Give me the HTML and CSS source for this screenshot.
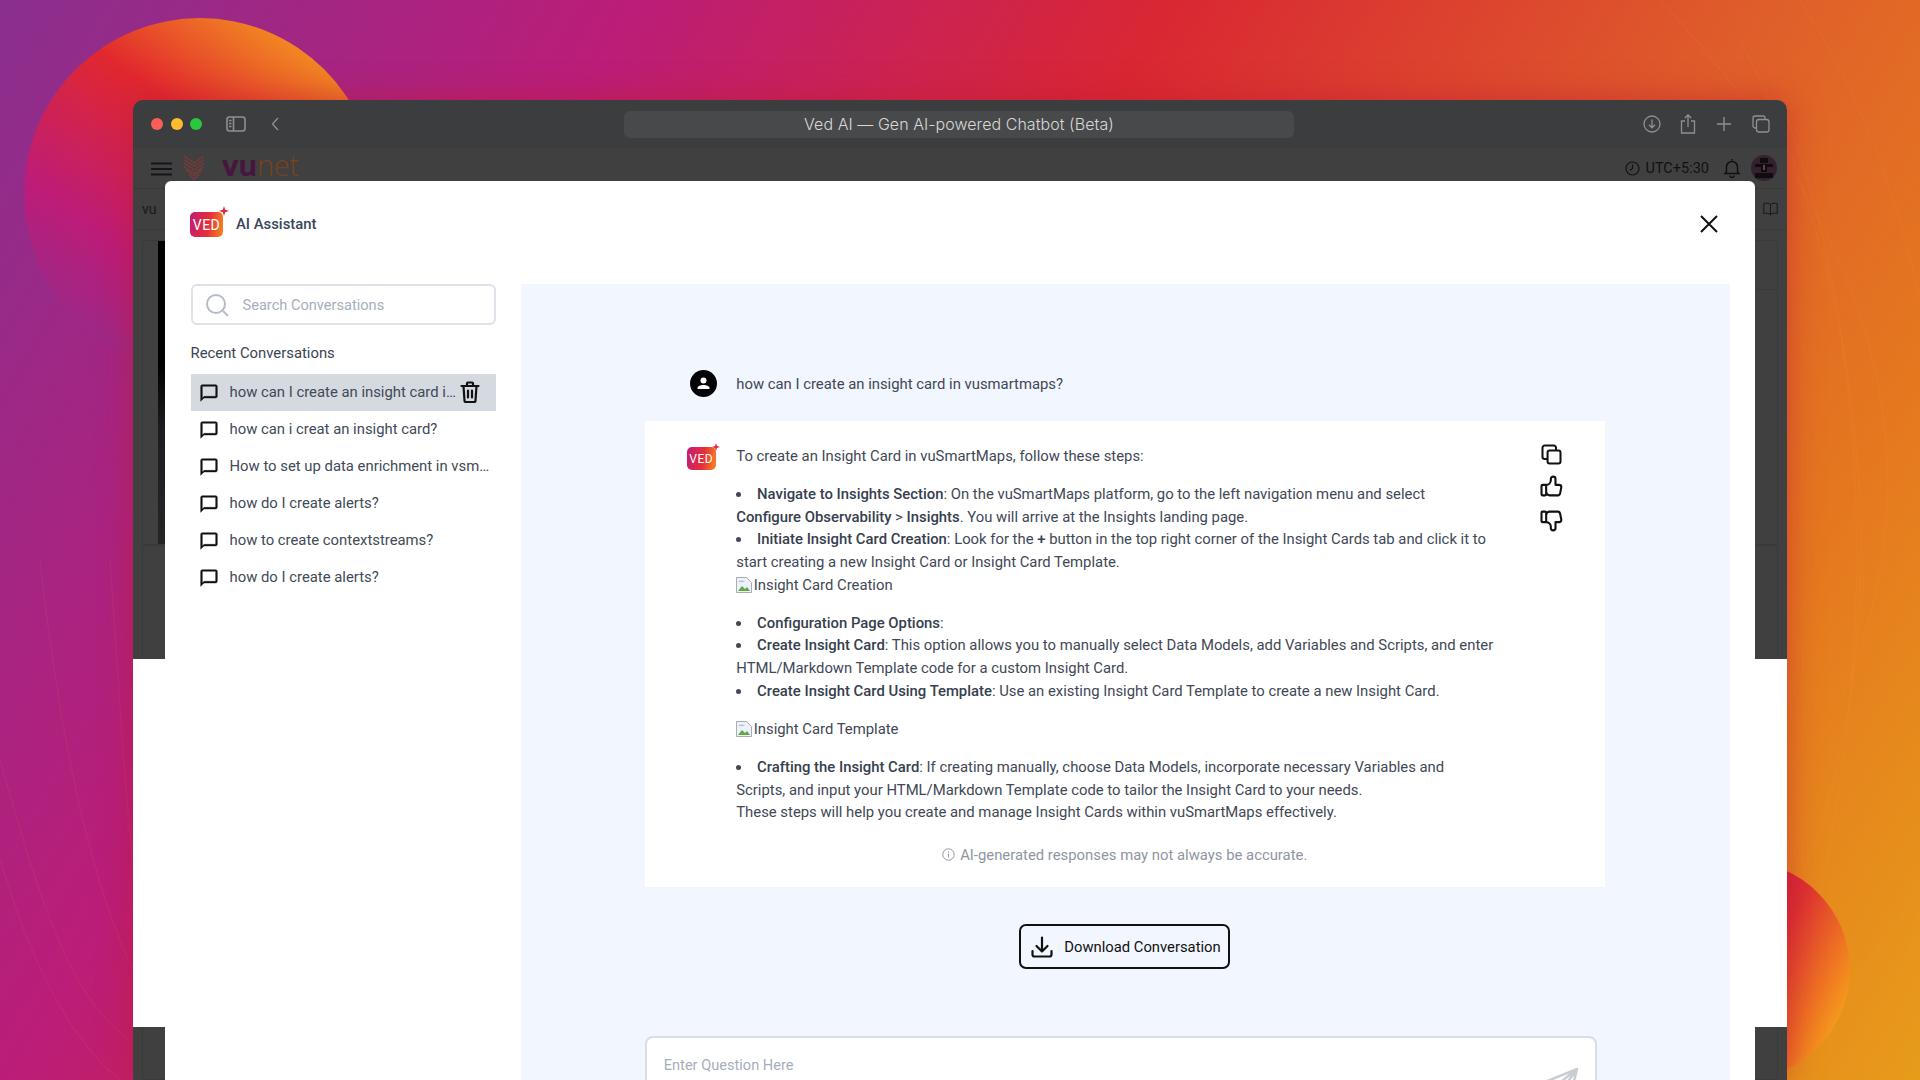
FILE: index.html
```html
<!DOCTYPE html>
<html lang="en">
<head>
<meta charset="utf-8">
<title>Ved AI — Gen AI-powered Chatbot (Beta)</title>
<link rel="stylesheet" href="styles.css">
</head>
<body>
<div class="desktop">
  <svg class="curves" viewBox="0 0 1920 1080" fill="none" aria-hidden="true">
    <path d="M1790 1000C1860 800 1900 400 1780 100"/>
    <path d="M1800 880C1880 700 1900 350 1740 40"/>
    <path d="M1800 780C1930 560 1940 300 1660 0"/>
    <path d="M1840 1080C2000 900 2000 300 1800 0"/>
    <path d="M1790 1040C1880 960 1940 880 1960 780"/>
    <path d="M1840 1080C1900 1040 1940 980 1970 900"/>
    <path d="M0 760C40 900 70 1000 130 1040"/>
    <path d="M0 860C30 960 70 1040 120 1080"/>
    <path d="M40 560C60 740 90 880 133 970"/>
    <path d="M110 560C120 700 125 800 133 860"/>
  </svg>
  <div class="orb orb-left"></div>
  <div class="orb orb-right"></div>

  <div class="window">
    <div class="titlebar">
      <div class="traffic">
        <span class="dot dot-red"></span><span class="dot dot-yellow"></span><span class="dot dot-green"></span>
      </div>
      <svg class="tb-sidebar" width="20" height="16" viewBox="0 0 20 16" fill="none" stroke="#8f9091" stroke-width="1.6"><rect x="1" y="1" width="18" height="14" rx="2.5"/><path d="M7.5 1v14"/><path d="M3 4.5h2.5M3 7.5h2.5M3 10.5h2.5" stroke-width="1.3"/></svg>
      <svg class="tb-back" width="8" height="14" viewBox="0 0 8 14" fill="none" stroke="#8f9091" stroke-width="1.3"><path d="M7 1 1.5 7 7 13"/></svg>
      <div class="address">Ved AI — Gen AI-powered Chatbot (Beta)</div>
      <div class="tb-right">
        <svg class="tb-download" width="18" height="18" viewBox="0 0 18 18" fill="none" stroke="#8f9091" stroke-width="1.3"><circle cx="9" cy="9" r="8"/><path d="M9 4.5v8M6 9.8 9 12.8 12 9.8"/></svg>
        <svg width="16" height="20" viewBox="0 0 16 20" fill="none" stroke="#8f9091" stroke-width="1.3"><path d="M5 7H1.5v12h13V7H11M8 13V1M4.8 4 8 1l3.2 3"/></svg>
        <svg width="16" height="16" viewBox="0 0 16 16" fill="none" stroke="#8f9091" stroke-width="1.4"><path d="M8 1v14M1 8h14"/></svg>
        <svg width="18" height="18" viewBox="0 0 18 18" fill="none" stroke="#8f9091" stroke-width="1.3"><rect x="4.5" y="4.5" width="12.5" height="12.5" rx="2.5"/><path d="M4.5 13H3a2 2 0 0 1-2-2V3a2 2 0 0 1 2-2h8a2 2 0 0 1 2 2v1.5"/></svg>
      </div>
    </div>

    <div class="app">
      <header class="app-header">
        <svg class="menu-icon" width="21" height="14" viewBox="0 0 21 14" fill="none" stroke="#15161a" stroke-width="2"><path d="M0 1.5h21M0 7h21M0 12.500h21"/></svg>
        <svg class="vunet-mark" width="22" height="26" viewBox="0 0 22 26" fill="none" stroke="#7a3a3c" stroke-width="1.300"><path d="M1 1l10 7 10-7M1 4.500l10 7 10-7M1 8l10 7 10-7M1 11.500l10 7 10-7M3 15l8 6 8-6M6 19.500l5 5 5-5"/></svg>
        <span class="vunet-word"><b>vu</b><i>net</i></span>
        <div class="app-header-right">
          <svg width="15" height="15" viewBox="0 0 15 15" fill="none" stroke="#101114" stroke-width="1.200"><circle cx="7.500" cy="7.500" r="6.500"/><path d="M7.500 3.500v4l-2.500 2"/></svg>
          <span class="utc">UTC+5:30</span>
          <svg class="bell" width="18" height="20" viewBox="0 0 18 20" fill="none" stroke="#101114" stroke-width="1.500"><path d="M9 1v1.500M3.500 14V9a5.500 5.500 0 0 1 11 0v5l1.500 1.500H2zM7 17.500a2 2 0 0 0 4 0"/></svg>
          <svg class="avatar" width="26" height="26" viewBox="0 0 26 26"><circle cx="13" cy="13" r="13" fill="#34202f"/><path d="M9 3h8v5h-8zM4 9h18v3H4zM10 11h6v6h-6zM4 18h18v5H4z" fill="#0f0c10"/><rect x="12" y="10" width="2" height="5" fill="#6d3a55"/></svg>
        </div>
      </header>
      <div class="app-tabs">
        <span class="tab-label">vu</span>
        <svg class="book" width="15" height="14" viewBox="0 0 15 14" fill="none" stroke="#17181b" stroke-width="1"><path d="M7.500 2.500C6 1 3 1 .8 1.500v10C3 11 6 11 7.500 12.800 9 11 12 11 14.200 11.500v-10C12 1 9 1 7.500 2.500zM7.500 2.500v10.300"/></svg>
      </div>
      <div class="canvas">
        <div class="band band-upper">
          <div class="frame">
            <div class="frame-strip"></div>
            <div class="frame-side"></div>
          </div>
          <div class="frame frame-lower"></div>
        </div>
        <div class="band-white"></div>
        <div class="band band-lower"><div class="frame frame-tail"></div></div>
      </div>

      <section class="modal">
        <div class="modal-head">
          <div class="ved-logo"><span class="ved-text">VED</span><svg class="ved-star" width="10" height="10" viewBox="0 0 10 10"><path d="M5 0 6.200 3.800 10 5 6.200 6.200 5 10 3.800 6.200 0 5 3.800 3.800z" fill="#e3263a"/></svg></div>
          <h1 class="modal-title">AI Assistant</h1>
          <svg class="close" width="20" height="20" viewBox="0 0 20 20" fill="none" stroke="#111" stroke-width="2"><path d="M2 2l16 16M18 2 2 18"/></svg>
        </div>
        <div class="modal-body">
          <aside class="sidebar">
            <label class="search">
              <svg width="24" height="24" viewBox="0 0 24 24" fill="none" stroke="#b5bcc9" stroke-width="2"><circle cx="11" cy="11" r="9"/><path d="M18 18l5 5"/></svg>
              <input type="text" placeholder="Search Conversations">
            </label>
            <h2 class="recent">Recent Conversations</h2>
            <ul class="conv-list">
              <li class="conv conv-active">
                <svg class="bubble" width="20" height="20" viewBox="0 0 24 24"><path d="M20 2H4c-1.100 0-2 .9-2 2v18l4-4h14c1.100 0 2-.9 2-2V4c0-1.100-.9-2-2-2zm0 14H6l-2 2V4h16v12z"/></svg>
                <span class="conv-text">how can I create an insight card in vusmartmaps?</span>
                <svg class="trash" width="24" height="24" viewBox="0 0 24 24" fill="none" stroke="#111" stroke-width="2.200" stroke-linecap="round" stroke-linejoin="round"><path d="M3.500 6h17M9 6V3.500a1 1 0 0 1 1-1h4a1 1 0 0 1 1 1V6M5.500 6l1 14.500a1.500 1.500 0 0 0 1.500 1.500h8a1.500 1.500 0 0 0 1.500-1.500l1-14.500M10 10.500v7M14 10.500v7"/></svg>
              </li>
              <li class="conv">
                <svg class="bubble" width="20" height="20" viewBox="0 0 24 24"><path d="M20 2H4c-1.100 0-2 .9-2 2v18l4-4h14c1.100 0 2-.9 2-2V4c0-1.100-.9-2-2-2zm0 14H6l-2 2V4h16v12z"/></svg>
                <span class="conv-text">how can i creat an insight card?</span>
              </li>
              <li class="conv">
                <svg class="bubble" width="20" height="20" viewBox="0 0 24 24"><path d="M20 2H4c-1.100 0-2 .9-2 2v18l4-4h14c1.100 0 2-.9 2-2V4c0-1.100-.9-2-2-2zm0 14H6l-2 2V4h16v12z"/></svg>
                <span class="conv-text">How to set up data enrichment in vsmartmaps?</span>
              </li>
              <li class="conv">
                <svg class="bubble" width="20" height="20" viewBox="0 0 24 24"><path d="M20 2H4c-1.100 0-2 .9-2 2v18l4-4h14c1.100 0 2-.9 2-2V4c0-1.100-.9-2-2-2zm0 14H6l-2 2V4h16v12z"/></svg>
                <span class="conv-text">how do I create alerts?</span>
              </li>
              <li class="conv">
                <svg class="bubble" width="20" height="20" viewBox="0 0 24 24"><path d="M20 2H4c-1.100 0-2 .9-2 2v18l4-4h14c1.100 0 2-.9 2-2V4c0-1.100-.9-2-2-2zm0 14H6l-2 2V4h16v12z"/></svg>
                <span class="conv-text">how to create contextstreams?</span>
              </li>
              <li class="conv">
                <svg class="bubble" width="20" height="20" viewBox="0 0 24 24"><path d="M20 2H4c-1.100 0-2 .9-2 2v18l4-4h14c1.100 0 2-.9 2-2V4c0-1.100-.9-2-2-2zm0 14H6l-2 2V4h16v12z"/></svg>
                <span class="conv-text">how do I create alerts?</span>
              </li>
            </ul>
          </aside>

          <main class="panel">
            <div class="thread">
              <div class="user-row">
                <svg class="user-avatar" width="27" height="27" viewBox="0 0 27 27"><circle cx="13.500" cy="13.500" r="13.500" fill="#050505"/><circle cx="13.500" cy="10.500" r="3" fill="#fff"/><path d="M7.500 19v-1c0-2 3-3 6-3s6 1 6 3v1z" fill="#fff"/></svg>
                <p class="user-text">how can I create an insight card in vusmartmaps?</p>
              </div>

              <article class="card">
                <div class="card-row">
                  <div class="ved-logo ved-logo-small"><span class="ved-text">VED</span><svg class="ved-star" width="8" height="8" viewBox="0 0 10 10"><path d="M5 0 6.200 3.800 10 5 6.200 6.200 5 10 3.800 6.200 0 5 3.800 3.800z" fill="#e3263a"/></svg></div>
                  <div class="answer">
                    <p>To create an Insight Card in vuSmartMaps, follow these steps:</p>
                    <ul>
                      <li><strong>Navigate to Insights Section</strong>: On the vuSmartMaps platform, go to the left navigation menu and select<br><strong>Configure Observability</strong> &gt; <strong>Insights</strong>. You will arrive at the Insights landing page.</li>
                      <li><strong>Initiate Insight Card Creation</strong>: Look for the <strong>+</strong> button in the top right corner of the Insight Cards tab and click it to start creating a new Insight Card or Insight Card Template.</li>
                    </ul>
                    <p class="broken broken-flush"><svg width="16" height="16" viewBox="0 0 16 16"><path d="M.5.5h10l5 5v10H.5z" fill="#eef2f8" stroke="#a9adb3"/><path d="M2 14l4-5 3 3 2-2 3 4z" fill="#5fa84a"/><path d="M2 5c2-2 5-2 7 0z" fill="#9dc3ee"/></svg><span>Insight Card Creation</span></p>
                    <ul>
                      <li><strong>Configuration Page Options</strong>:</li>
                      <li><strong>Create Insight Card</strong>: This option allows you to manually select Data Models, add Variables and Scripts, and enter HTML/Markdown Template code for a custom Insight Card.</li>
                      <li><strong>Create Insight Card Using Template</strong>: Use an existing Insight Card Template to create a new Insight Card.</li>
                    </ul>
                    <p class="broken"><svg width="16" height="16" viewBox="0 0 16 16"><path d="M.5.5h10l5 5v10H.5z" fill="#eef2f8" stroke="#a9adb3"/><path d="M2 14l4-5 3 3 2-2 3 4z" fill="#5fa84a"/><path d="M2 5c2-2 5-2 7 0z" fill="#9dc3ee"/></svg><span>Insight Card Template</span></p>
                    <ul>
                      <li><strong>Crafting the Insight Card</strong>: If creating manually, choose Data Models, incorporate necessary Variables and Scripts, and input your HTML/Markdown Template code to tailor the Insight Card to your needs.</li>
                    </ul>
                    <p class="answer-end">These steps will help you create and manage Insight Cards within vuSmartMaps effectively.</p>
                  </div>
                  <div class="actions">
                    <svg width="27" height="27" viewBox="0 0 24 24" fill="none" stroke="#111" stroke-width="1.800" stroke-linejoin="round"><rect x="8.500" y="8.500" width="11.500" height="11.500" rx="1.800"/><path d="M16 8.500V6a2 2 0 0 0-2-2H6a2 2 0 0 0-2 2v8a2 2 0 0 0 2 2h2.500"/></svg>
                    <svg width="28" height="28" viewBox="0 0 24 24" fill="none" stroke="#111" stroke-width="1.800" stroke-linecap="round" stroke-linejoin="round"><path d="M7 11v8a1 1 0 0 1-1 1H4a1 1 0 0 1-1-1v-7a1 1 0 0 1 1-1h3a4 4 0 0 0 4-4V6a2 2 0 0 1 4 0v5h3a2 2 0 0 1 2 2l-1 5a2 3 0 0 1-2 2h-7a3 3 0 0 1-3-3"/></svg>
                    <svg width="28" height="28" viewBox="0 0 24 24" fill="none" stroke="#111" stroke-width="1.800" stroke-linecap="round" stroke-linejoin="round"><path d="M7 13V5a1 1 0 0 0-1-1H4a1 1 0 0 0-1 1v7a1 1 0 0 0 1 1h3a4 4 0 0 1 4 4v1a2 2 0 0 0 4 0v-5h3a2 2 0 0 0 2-2l-1-5a2 3 0 0 0-2-2h-7a3 3 0 0 0-3 3"/></svg>
                  </div>
                </div>
                <p class="disclaimer"><svg width="13" height="13" viewBox="0 0 13 13" fill="none" stroke="#8f96a1" stroke-width="1"><circle cx="6.500" cy="6.500" r="5.700"/><path d="M6.500 5.800v3.700M6.500 3.500v1.100"/></svg><span>AI-generated responses may not always be accurate.</span></p>
              </article>

              <button class="download" type="button">
                <svg width="24" height="24" viewBox="0 0 24 24" fill="none" stroke="#111" stroke-width="2.200" stroke-linecap="round" stroke-linejoin="round"><path d="M12 2.500v14M6.500 11l5.500 5.500 5.500-5.500"/><path d="M2.500 16v3.500a2 2 0 0 0 2 2h15a2 2 0 0 0 2-2V16"/></svg>
                <span>Download Conversation</span>
              </button>

              <div class="composer">
                <input type="text" placeholder="Enter Question Here">
                <svg class="send" width="40" height="40" viewBox="0 0 40 40" fill="none" stroke="#c9ccd2" stroke-width="2.500" stroke-linejoin="round"><path d="M38 1 1 16l12 5zM38 1 13 21v14l7-9zM38 1l-8 32-10-7"/></svg>
              </div>
            </div>
          </main>
        </div>
      </section>
    </div>
  </div>
</div>
</body>
</html>
```

FILE: styles.css
```css
* { box-sizing: border-box; }
html, body { margin: 0; padding: 0; }
h1, h2, p, ul { margin: 0; padding: 0; }

.desktop {
  position: relative;
  width: 1920px;
  height: 1080px;
  overflow: hidden;
  font-family: Roboto, "Liberation Sans", sans-serif;
  background: linear-gradient(120deg, #8a2f8e 0%, #bb1d78 25%, #d92733 46%, #df5f2a 70%, #e5781f 84%, #e79c1a 100%);
}
.curves { position: absolute; inset: 0; width: 1920px; height: 1080px; stroke: rgba(255, 190, 90, .06); stroke-width: 1.500; }
.orb { position: absolute; border-radius: 50%; }
.orb-left {
  left: 24px; top: 18px; width: 352px; height: 352px;
  background: linear-gradient(215deg, #f8a61f 6%, #e1282e 38%, #bd1c78 68%, #8c2f8e 96%);
}
.orb-right {
  left: 1632px; top: 861px; width: 218px; height: 218px;
  background: linear-gradient(115deg, #c4144a 38%, #dc2f32 58%, #ef7522 78%, #f59a1c 88%);
}

.window {
  position: relative;
  width: 1654px;
  height: 980px;
  margin: 100px 0 0 133px;
  display: flex;
  flex-direction: column;
  border-radius: 10px 10px 0 0;
  overflow: hidden;
  box-shadow: 0 0 32px rgba(190, 25, 50, .55);
}

.titlebar {
  flex: none;
  height: 48px;
  display: flex;
  align-items: center;
  background: #3c3d3f;
  position: relative;
}
.traffic { display: flex; gap: 7.500px; margin-left: 18px; }
.dot { width: 12px; height: 12px; border-radius: 50%; }
.dot-red { background: #fc5f57; }
.dot-yellow { background: #febc2e; }
.dot-green { background: #28c840; }
.tb-sidebar { margin-left: 24px; }
.tb-back { margin-left: 25px; }
.address {
  width: 670px;
  height: 27px;
  margin-left: 345px;
  border-radius: 6px;
  background: #48494b;
  color: #d8d8d8;
  font-family: Inter, sans-serif;
  font-weight: 300;
  font-size: 16px;
  letter-spacing: .05px;
  line-height: 27px;
  text-align: center;
}
.tb-right { margin-left: auto; margin-right: 17px; display: flex; align-items: center; gap: 20px; }
.tb-download { margin-right: -1px; }

.app { flex: 1; position: relative; display: flex; flex-direction: column; min-height: 0; }
.app-header {
  flex: none;
  height: 41px;
  display: flex;
  align-items: flex-start;
  background: #404040;
  border-bottom: 1px solid #3a3a3a;
}
.menu-icon { margin: 14px 0 0 18px; }
.vunet-mark { margin: 7px 0 0 11px; }
.vunet-word { margin: 2px 0 0 17px; font-size: 29px; line-height: 30px; font-family: "Open Sans", sans-serif; letter-spacing: -.3px; }
.vunet-word b { font-weight: 700; color: #45163f; }
.vunet-word i { font-style: normal; font-weight: 300; color: #7a421c; }
.app-header-right { margin-left: auto; display: flex; align-items: center; height: 40px; padding-right: 10px; color: #101114; font-size: 14.500px; }
.utc { margin-left: 6px; }
.bell { margin-left: 14px; }
.avatar { margin-left: 10px; }
.app-tabs { flex: none; height: 41px; background: #404040; border-bottom: 1px solid #3a3a3a; display: flex; align-items: center; color: #17181b; font-size: 14px; padding: 0 9px; }
.book { margin-left: auto; }

.canvas { flex: 1; display: flex; flex-direction: column; min-height: 0; }
.band { background: #404040; padding: 0 9px; }
.band-upper { flex: none; height: 429px; padding-top: 10px; }
.band-white { flex: none; height: 368px; background: #fff; }
.band-lower { flex: 1; }
.frame { display: flex; height: 305px; border: 1px solid #3a3a3a; }
.frame-strip { width: 7px; height: 100%; margin-left: 15px; background: linear-gradient(180deg, #000 0%, #000 40%, #1c1d21 62%, #242527 100%); }
.frame-side { width: 23px; height: 49px; margin-left: auto; border-bottom: 1px solid #3a3a3a; }
.frame-lower { height: 114px; border-bottom: 0; }
.frame-tail { height: 53px; border-top: 0; }

.modal {
  position: absolute;
  left: 32px; right: 32px; top: 33px; bottom: 0;
  background: #fff;
  border-radius: 6px 6px 0 0;
  display: flex;
  flex-direction: column;
  padding: 0 25px;
  color: #3f4856;
  font-size: 14.850px;
}
.modal-head { flex: none; height: 103px; display: flex; align-items: flex-start; padding-top: 30px; }
.ved-logo {
  position: relative;
  width: 33px; height: 25px;
  margin-top: 1px;
  border-radius: 5px;
  background: linear-gradient(100deg, #c01d78 0%, #e52e38 55%, #f58a1f 100%);
  color: #fff;
  display: flex; align-items: center; justify-content: center;
}
.ved-text { font-size: 14px; font-weight: 400; line-height: 1; letter-spacing: .5px; }
.ved-star { position: absolute; right: -6px; top: -6px; }
.modal-title { margin: 3px 0 0 13px; font-size: 14.850px; font-weight: 500; line-height: 20px; color: #39465a; }
.close { margin: 3px 11.500px 0 auto; }

.modal-body { flex: 1; min-height: 0; display: flex; gap: 25px; }
.sidebar { flex: none; width: 305px; margin-left: .5px; }
.search { display: flex; align-items: center; gap: 14px; height: 41px; padding-left: 12px; border: 2px solid #dde1e8; border-radius: 6px; }
.search input { flex: 1; min-width: 0; border: 0; outline: 0; padding: 0; background: transparent; font: 14.600px Roboto, sans-serif; color: #3f4856; }
.search input::placeholder { color: #a6aebb; opacity: 1; }
.recent { margin: 18px 0 0; font-size: 14.850px; font-weight: 400; line-height: 20px; color: #3a4452; }
.conv-list { list-style: none; margin-top: 11px; }
.conv { display: flex; align-items: center; height: 37.200px; padding-left: 8px; font-size: 14.850px; color: #414a58; }
.conv-active { background: #d5d9e0; height: 37px; }
.bubble { flex: none; fill: #111; stroke: #111; stroke-width: .5; }
.conv-text { margin-left: 11px; padding-bottom: 2px; flex: 1; min-width: 0; white-space: nowrap; overflow: hidden; text-overflow: ellipsis; padding-right: 6px; }
.conv-active .conv-text { flex: none; width: 227px; padding-right: 0; }
.trash { flex: none; margin: -2px 0 0 1.500px; }

.panel { flex: 1; min-width: 0; background: #f2f6fe; padding-top: 86px; display: flex; justify-content: center; }
.thread { width: 960px; margin-left: -1px; }
.user-row { display: flex; align-items: center; height: 27px; padding-left: 45px; }
.user-text { margin-left: 19.500px; font-size: 14.850px; color: #3f4856; }
.card { margin-top: 24px; height: 466px; background: #fff; padding: 24px 0 0 0; }
.card-row { display: flex; align-items: flex-start; }
.ved-logo-small { flex: none; width: 29px; height: 23px; margin: 2px 0 0 42px; }
.ved-logo-small .ved-text { font-size: 12px; }
.ved-logo-small .ved-star { right: -4px; top: -4px; }
.answer { width: 758px; margin-left: 20.500px; font-size: 14.850px; line-height: 22.600px; color: #3f4856; }
.answer strong { font-weight: 500; color: #36404e; }
.answer > * + * { margin-top: 15.600px; }
.answer ul { list-style: disc inside; }
.answer .answer-end, .answer .broken-flush { margin-top: 0; }
.broken { display: flex; align-items: center; gap: 1.500px; }
.actions { margin-left: 43.500px; display: flex; flex-direction: column; align-items: center; gap: 4px; margin-top: -4px; }
.actions svg:last-child { margin-top: 3px; }
.disclaimer { display: flex; align-items: center; justify-content: center; gap: 5px; margin-top: 20px; font-size: 14.850px; line-height: 22px; color: #8f96a1; }
.download {
  display: flex; align-items: center; gap: 10px;
  width: 211px; height: 45px;
  margin: 37px auto 0;
  padding: 0 0 0 9px;
  border: 2px solid #111; border-radius: 7px;
  background: #f2f6fe;
  color: #111;
  font: 14.800px Roboto, sans-serif;
}
.composer {
  display: flex; justify-content: space-between;
  width: 952px; height: 100px;
  margin-top: 67px;
  padding: 17px 16px 0 17px;
  background: #fff;
  border: 2px solid #d9dde5; border-radius: 8px;
}
.composer input { flex: 1; height: 20px; min-width: 0; border: 0; outline: 0; padding: 0; background: transparent; font: 14.600px Roboto, sans-serif; color: #3f4856; }
.composer input::placeholder { color: #a6aebb; opacity: 1; }
.send { flex: none; margin-top: 13px; }
```
